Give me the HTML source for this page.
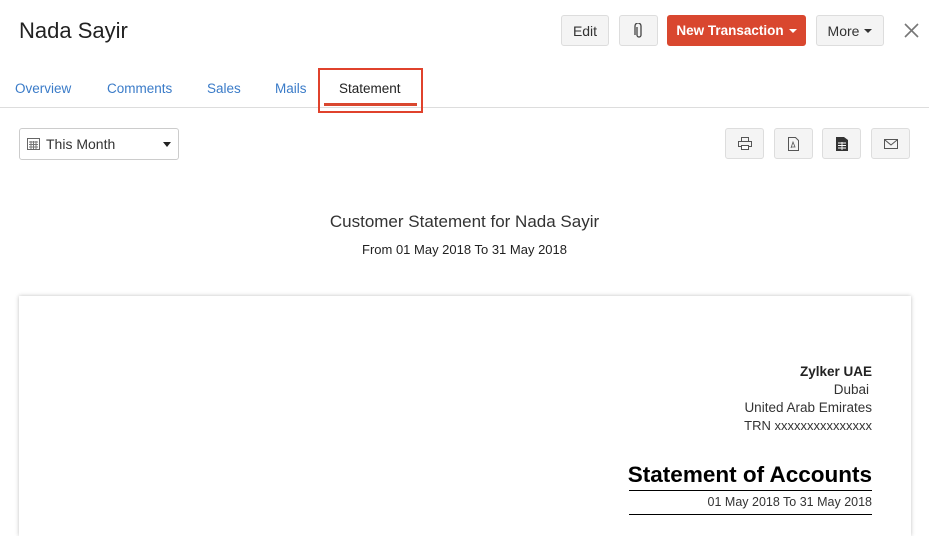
<!DOCTYPE html>
<html><head><style>
*{margin:0;padding:0;box-sizing:border-box}
body{width:929px;height:523px;overflow:hidden;background:#fff;font-family:"Liberation Sans",sans-serif;position:relative;color:#222}
.a{position:absolute}
.btn{position:absolute;top:15px;height:31px;border:1px solid #ddd;border-radius:3px;background:#f4f4f4;font-size:14px;color:#333;display:flex;align-items:center;justify-content:center}
.ib{position:absolute;top:128px;width:39px;height:31px;border:1px solid #ddd;border-radius:3px;background:#f4f4f4;display:flex;align-items:center;justify-content:center}
.tab{position:absolute;top:81px;font-size:13.5px;color:#3a7bc8}
.car{display:inline-block;border-left:4px solid transparent;border-right:4px solid transparent;border-top:4px solid currentColor;margin-left:5px;vertical-align:middle}
.r{position:absolute;right:57px;font-family:"Liberation Sans",sans-serif;font-size:13.5px;color:#333;text-align:right;white-space:nowrap}
</style></head><body>
<div class="a" style="left:19px;top:18px;font-size:22px;color:#222">Nada Sayir</div>
<div class="btn" style="left:561px;width:48px">Edit</div>
<div class="btn" style="left:619px;width:39px"><svg width="10" height="16" viewBox="0 0 10 16"><path d="M3 4v8a2 2 0 0 0 4 0V3a3 3 0 0 0-6 0v9" fill="none" stroke="#444" stroke-width="1.3"/></svg></div>
<div class="btn" style="left:667px;width:139px;background:#d9472f;border-color:#d9472f;color:#fff;font-weight:bold;font-size:13.5px">New Transaction<span class="car"></span></div>
<div class="btn" style="left:816px;width:68px">More<span class="car"></span></div>
<svg class="a" style="left:904px;top:23px" width="15" height="15"><path d="M1 1L14 14M14 1L1 14" stroke="#777" stroke-width="1.6"/></svg>
<div class="tab" style="left:15px">Overview</div>
<div class="tab" style="left:107px">Comments</div>
<div class="tab" style="left:207px">Sales</div>
<div class="tab" style="left:275px">Mails</div>
<div class="tab" style="left:339px;color:#222">Statement</div>
<div class="a" style="left:0;top:107px;width:929px;height:1px;background:#ddd"></div>
<div class="a" style="left:318px;top:68px;width:105px;height:45px;border:2px solid #e0422c"></div>
<div class="a" style="left:324px;top:103px;width:93px;height:3px;background:#d9472f"></div>
<div class="a" style="left:19px;top:128px;width:160px;height:32px;border:1px solid #ccc;border-radius:3px;font-size:14px;color:#333;padding:7px 0 0 26px">This Month
<svg class="a" style="left:7px;top:8px" width="13" height="13"><rect x="0.5" y="1.5" width="12" height="11" fill="none" stroke="#666"/><path d="M2 5h9M2 7.5h9M2 10h9M4 4v8M6.5 4v8M9 4v8" stroke="#777" stroke-width="1"/></svg>
<span class="a" style="left:143px;top:13px;border-left:4px solid transparent;border-right:4px solid transparent;border-top:5px solid #222"></span></div>
<div class="ib" style="left:725px"><svg width="14" height="13"><rect x="3.5" y="0.5" width="7" height="4" fill="none" stroke="#555"/><rect x="0.5" y="4.5" width="13" height="5" fill="none" stroke="#555"/><rect x="3.5" y="8.5" width="7" height="4" fill="#fff" stroke="#555"/></svg></div>
<div class="ib" style="left:774px"><svg width="11" height="14"><path d="M0.5 0.5h7l3 3v10h-10z" fill="none" stroke="#555"/><path d="M3 11l2-6 2 5 -4 0" fill="none" stroke="#555" stroke-width=".8"/></svg></div>
<div class="ib" style="left:822px"><svg width="12" height="14"><path d="M0 0h8l4 3v11h-12z" fill="#333"/><path d="M2 6h8M2 8.5h8M2 11h8M6 5v8" stroke="#fff" stroke-width=".9"/></svg></div>
<div class="ib" style="left:871px"><svg width="14" height="10"><rect x="0.5" y="0.5" width="13" height="9" fill="none" stroke="#555"/><path d="M1 1l6 5 6-5" fill="none" stroke="#555"/></svg></div>
<div class="a" style="left:0;width:929px;top:212px;text-align:center;font-size:17px;color:#333">Customer Statement for Nada Sayir</div>
<div class="a" style="left:0;width:929px;top:242px;text-align:center;font-size:13px;color:#222">From 01 May 2018 To 31 May 2018</div>
<div class="a" style="left:19px;top:296px;width:892px;height:240px;background:#fff;box-shadow:0 0 4px rgba(0,0,0,.25)"></div>
<div class="r" style="top:364px;font-weight:bold;color:#222">Zylker UAE</div>
<div class="r" style="top:382px;right:60px">Dubai</div>
<div class="r" style="top:400px">United Arab Emirates</div>
<div class="r" style="top:418px;font-size:13px">TRN xxxxxxxxxxxxxxx</div>
<div class="r" style="top:462px;font-size:22.5px;font-weight:bold;color:#000">Statement of Accounts</div>
<div class="a" style="left:629px;top:490px;width:243px;height:1px;background:#000"></div>
<div class="r" style="top:495px;font-size:12.5px">01 May 2018 To 31 May 2018</div>
<div class="a" style="left:629px;top:514px;width:243px;height:1px;background:#000"></div>
</body></html>
